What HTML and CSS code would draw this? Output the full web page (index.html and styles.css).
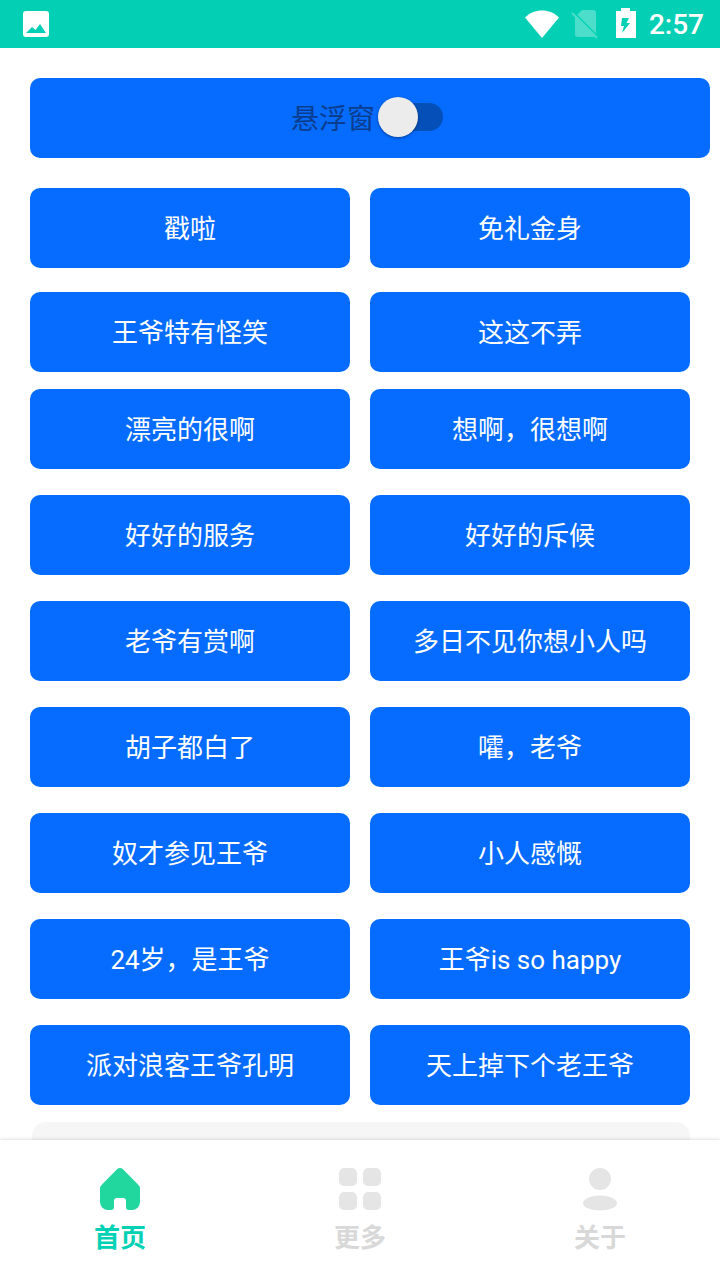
FILE: index.html
```html
<!DOCTYPE html>
<html lang="zh-CN">
<head>
    <meta charset="UTF-8">
    <meta name="viewport" content="width=device-width, initial-scale=1.0">
    <title>王爷语音</title>
    <link rel="stylesheet" href="styles.css">
</head>
<body>
    <div class="status">
        <svg class="pic" width="30" height="30" viewBox="0 0 30 30">
            <path fill="#fff" fill-rule="evenodd" d="M5 2h20a3 3 0 0 1 3 3v20a3 3 0 0 1-3 3H5a3 3 0 0 1-3-3V5a3 3 0 0 1 3-3zM5 24h20l-6-9-4.500 6-3.500-3z"/>
        </svg>
        <div class="status_right">
            <svg width="36" height="30" viewBox="0 0 36 30">
                <path fill="#fff" d="M18 29 1 8.500C5.500 4 11.500 1.500 18 1.500S30.500 4 35 8.500z"/>
            </svg>
            <svg class="sim" width="28" height="30" viewBox="0 0 28 30">
                <path fill="#4ddecb" d="M11 1h11a3 3 0 0 1 3 3v21a3 3 0 0 1-3 3H7a3 3 0 0 1-3-3V8z"/>
                <path stroke="#00d0b4" stroke-width="1.500" d="M3 3.500l24 24"/>
                <path stroke="#4ddecb" stroke-width="2" d="M1 4l25 25"/>
            </svg>
            <svg class="bat" width="20" height="32" viewBox="0 0 20 32">
                <path fill="#fff" fill-rule="evenodd" d="M5 0h9v3h6v27H0V3h5zM6 10h7l-2.500 5H14L6 25l2-7H5z"/>
            </svg>
            <span class="time">2:57</span>
        </div>
    </div>

    <div class="content">
        <div class="btn float_btn">
            <span class="float_label">悬浮窗</span>
            <span class="switch"><span class="track"></span><span class="thumb"></span></span>
        </div>

        <div class="row row1"><a class="btn">戳啦</a><a class="btn">免礼金身</a></div>
        <div class="row row2"><a class="btn">王爷特有怪笑</a><a class="btn">这这不弄</a></div>
        <div class="row row3"><a class="btn">漂亮的很啊</a><a class="btn">想啊，很想啊</a></div>
        <div class="row"><a class="btn">好好的服务</a><a class="btn">好好的斥候</a></div>
        <div class="row"><a class="btn">老爷有赏啊</a><a class="btn">多日不见你想小人吗</a></div>
        <div class="row"><a class="btn">胡子都白了</a><a class="btn">嚯，老爷</a></div>
        <div class="row"><a class="btn">奴才参见王爷</a><a class="btn">小人感慨</a></div>
        <div class="row"><a class="btn">24岁，是王爷</a><a class="btn">王爷is so happy</a></div>
        <div class="row"><a class="btn">派对浪客王爷孔明</a><a class="btn">天上掉下个老王爷</a></div>
        <div class="card"></div>
    </div>

    <div class="tabbar">
        <div class="tab active">
            <svg width="44" height="44" viewBox="0 0 44 44">
                <path fill="#22d79e" d="M19 2.200a4.200 4.200 0 0 1 6 0L40 17.500a6 6 0 0 1 2 4.500V35a8 8 0 0 1-8 8h-3a3 3 0 0 1-3-3v-6a3 3 0 0 0-3-3h-6a3 3 0 0 0-3 3v6a3 3 0 0 1-3 3h-3a8 8 0 0 1-8-8V22a6 6 0 0 1 2-4.500z"/>
            </svg>
            <span>首页</span>
        </div>
        <div class="tab">
            <svg width="44" height="44" viewBox="0 0 44 44">
                <rect fill="#e5e5e5" x="1" y="1" width="18" height="18" rx="5"/>
                <rect fill="#e5e5e5" x="25" y="1" width="18" height="18" rx="5"/>
                <rect fill="#e5e5e5" x="1" y="25" width="18" height="18" rx="5"/>
                <rect fill="#e5e5e5" x="25" y="25" width="18" height="18" rx="5"/>
            </svg>
            <span>更多</span>
        </div>
        <div class="tab">
            <svg width="44" height="44" viewBox="0 0 44 44">
                <circle fill="#e5e5e5" cx="22" cy="12" r="11"/>
                <ellipse fill="#e5e5e5" cx="22" cy="36" rx="17" ry="7.500"/>
            </svg>
            <span>关于</span>
        </div>
    </div>
</body>
</html>
```

FILE: styles.css
```css
* {
    margin: 0;
    padding: 0;
    box-sizing: border-box;
}
html, body {
    width: 720px;
    height: 1280px;
    overflow: hidden;
}
body {
    display: flex;
    flex-direction: column;
    background: #fff;
    font-family: Roboto, "Noto Sans CJK SC", sans-serif;
}
.status {
    height: 48px;
    flex: none;
    background: #03cfb4;
    display: flex;
    align-items: center;
    justify-content: space-between;
    padding: 0 16px 0 21px;
}
.status_right {
    display: flex;
    align-items: center;
    color: #fff;
}
.sim {
    margin-left: 11px;
}
.bat {
    margin-left: 17px;
}
.time {
    margin-left: 13px;
    font-size: 28px;
    font-weight: 500;
}
.content {
    flex: 1;
    overflow: hidden;
    padding: 30px 30px 0;
}
.btn {
    display: flex;
    align-items: center;
    justify-content: center;
    height: 80px;
    padding-bottom: 4px;
    background: #056cff;
    border-radius: 10px;
    color: #fff;
    font-size: 26px;
}
.float_btn {
    width: 680px;
    padding: 0 6px 0 0;
}
.float_label {
    color: #0a3d8f;
    font-size: 28px;
    margin-bottom: 3px;
}
.switch {
    display: block;
    position: relative;
    width: 65px;
    height: 40px;
    margin: 0 0 2px 3px;
}
.track {
    position: absolute;
    right: 0;
    top: 6px;
    width: 50px;
    height: 28px;
    border-radius: 14px;
    background: #0450b8;
}
.thumb {
    position: absolute;
    left: 0;
    top: 0;
    width: 40px;
    height: 40px;
    border-radius: 50%;
    background: #ececec;
    box-shadow: 0 1px 3px rgba(0, 0, 0, .4);
}
.row {
    display: grid;
    grid-template-columns: 320px 320px;
    column-gap: 20px;
    margin-top: 26px;
}
.row1 {
    margin-top: 30px;
}
.row2 {
    margin-top: 24px;
}
.row3 {
    margin-top: 17px;
}
.card {
    width: 658px;
    height: 60px;
    margin: 17px 0 0 2px;
    border-radius: 14px;
    background: #f6f6f6;
}
.tabbar {
    height: 140px;
    flex: none;
    display: grid;
    grid-template-columns: repeat(3, 240px);
    background: #fff;
    box-shadow: 0 -1px 3px rgba(0, 0, 0, .12);
    position: relative;
}
.tab {
    display: flex;
    flex-direction: column;
    align-items: center;
    padding-top: 27px;
    color: #d8d8d8;
    font-size: 26px;
    font-weight: 700;
}
.tab span {
    line-height: 38px;
    margin-top: 8px;
}
.active {
    color: #00d0b4;
}
```
